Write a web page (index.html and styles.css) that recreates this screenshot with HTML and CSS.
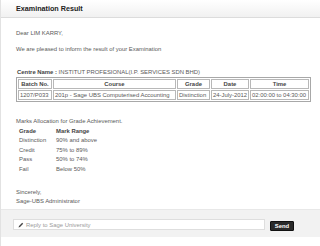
FILE: index.html
```html
<!DOCTYPE html>
<html>
<head>
<meta charset="utf-8">
<link rel="stylesheet" href="styles.css">
</head>
<body>
<div class="frame">
  <div class="header">Examination Result</div>
  <div class="content">
    <p class="line dear">Dear LIM KARRY,</p>
    <p class="line inform">We are pleased to inform the result of your Examination</p>
    <p class="line centre"><b>Centre Name :</b> INSTITUT PROFESIONAL(I.P. SERVICES SDN BHD)</p>
    <table class="result">
      <colgroup>
        <col class="c1"><col class="c2"><col class="c3"><col class="c4"><col class="c5">
      </colgroup>
      <tr><th>Batch No.</th><th>Course</th><th>Grade</th><th>Date</th><th>Time</th></tr>
      <tr><td>1207/P033</td><td>201p - Sage UBS Computerised Accounting</td><td>Distinction</td><td>24-July-2012</td><td>02:00:00 to 04:30:00</td></tr>
    </table>
    <p class="line marks">Marks Allocation for Grade Achievement.</p>
    <div class="grades">
      <div class="g gh">Grade</div><div class="g gh">Mark Range</div>
      <div class="g">Distinction</div><div class="g">90% and above</div>
      <div class="g">Credit</div><div class="g">75% to 89%</div>
      <div class="g">Pass</div><div class="g">50% to 74%</div>
      <div class="g">Fail</div><div class="g">Below 50%</div>
    </div>
    <p class="line sincerely">Sincerely,</p>
    <p class="line">Sage-UBS Administrator</p>
  </div>
  <div class="footer">
    <div class="reply">
      <svg class="pencil" width="6" height="6" viewBox="0 0 6 6"><path d="M0.5 5.5 L1 4 L4.2 0.8 L5.2 1.8 L2 5 Z" fill="#444"/></svg>
      <span class="ph">Reply to Sage University</span>
    </div>
    <div class="send">Send</div>
  </div>
</div>
</body>
</html>
```
FILE: styles.css
```css
html, body {
  margin: 0;
  padding: 0;
  background: #fff;
}
body {
  font-family: "Liberation Sans", Arial, sans-serif;
  color: #5a5a5a;
  font-size: 5.9px;
}
.frame {
  width: 320px;
  height: 246px;
  border-left: 1px solid #e2e2e2;
  box-sizing: border-box;
  display: flex;
  flex-direction: column;
}
.header {
  height: 17px;
  line-height: 17px;
  padding-left: 15px;
  font-size: 7.2px;
  font-weight: bold;
  color: #222;
  background: linear-gradient(#ffffff, #f1f1f1);
  border-bottom: 1px solid #dcdcdc;
}
.content {
  flex: 1;
  padding: 11px 0 0 15px;
}
.line {
  margin: 0;
  line-height: 9px;
  white-space: nowrap;
}
.inform { margin-top: 6.5px; }
.centre { margin-top: 14px; padding-left: 1px; }
.centre b { color: #444; }
.result {
  margin-top: 0.5px;
  border: 1px solid #a8a8a8;
  border-spacing: 1px;
  table-layout: fixed;
  width: 288px;
  font-size: 5.9px;
}
.result col.c1 { width: 34px; }
.result col.c2 { width: 123px; }
.result col.c3 { width: 33px; }
.result col.c4 { width: 38px; }
.result col.c5 { width: 59px; }
.result th, .result td {
  border: 1px solid #b8b8b8;
  padding: 0 1px;
  height: 8px;
  line-height: 8px;
  white-space: nowrap;
  overflow: hidden;
}
.result th {
  font-weight: bold;
  color: #444;
  text-align: center;
}
.result td { text-align: left; }
.marks { margin-top: 15px; }
.grades {
  display: grid;
  grid-template-columns: 37px auto;
  padding-left: 3px;
  margin-top: 1px;
}
.g {
  line-height: 9.4px;
  white-space: nowrap;
}
.gh { font-weight: bold; color: #444; }
.sincerely { margin-top: 14px; }
.footer {
  height: 28px;
  margin-bottom: 9px;
  background: #f2f2f2;
  border-top: 1px solid #e8e8e8;
  box-sizing: border-box;
  display: flex;
  align-items: center;
  padding-left: 12px;
  gap: 5px;
}
.reply {
  width: 252px;
  height: 11px;
  box-sizing: border-box;
  background: #fff;
  border: 1px solid #dedede;
  display: flex;
  align-items: center;
  padding-left: 4px;
  gap: 2px;
  margin-top: 2px;
}
.pencil { display: block; }
.ph { color: #9a9a9a; font-size: 5.9px; }
.send {
  width: 24px;
  height: 10px;
  box-sizing: border-box;
  background: #2a2a2a;
  border: 1px solid #111;
  border-radius: 1px;
  color: #fff;
  font-weight: bold;
  font-size: 5.9px;
  line-height: 8px;
  text-align: center;
  margin-top: 4px;
}
```
